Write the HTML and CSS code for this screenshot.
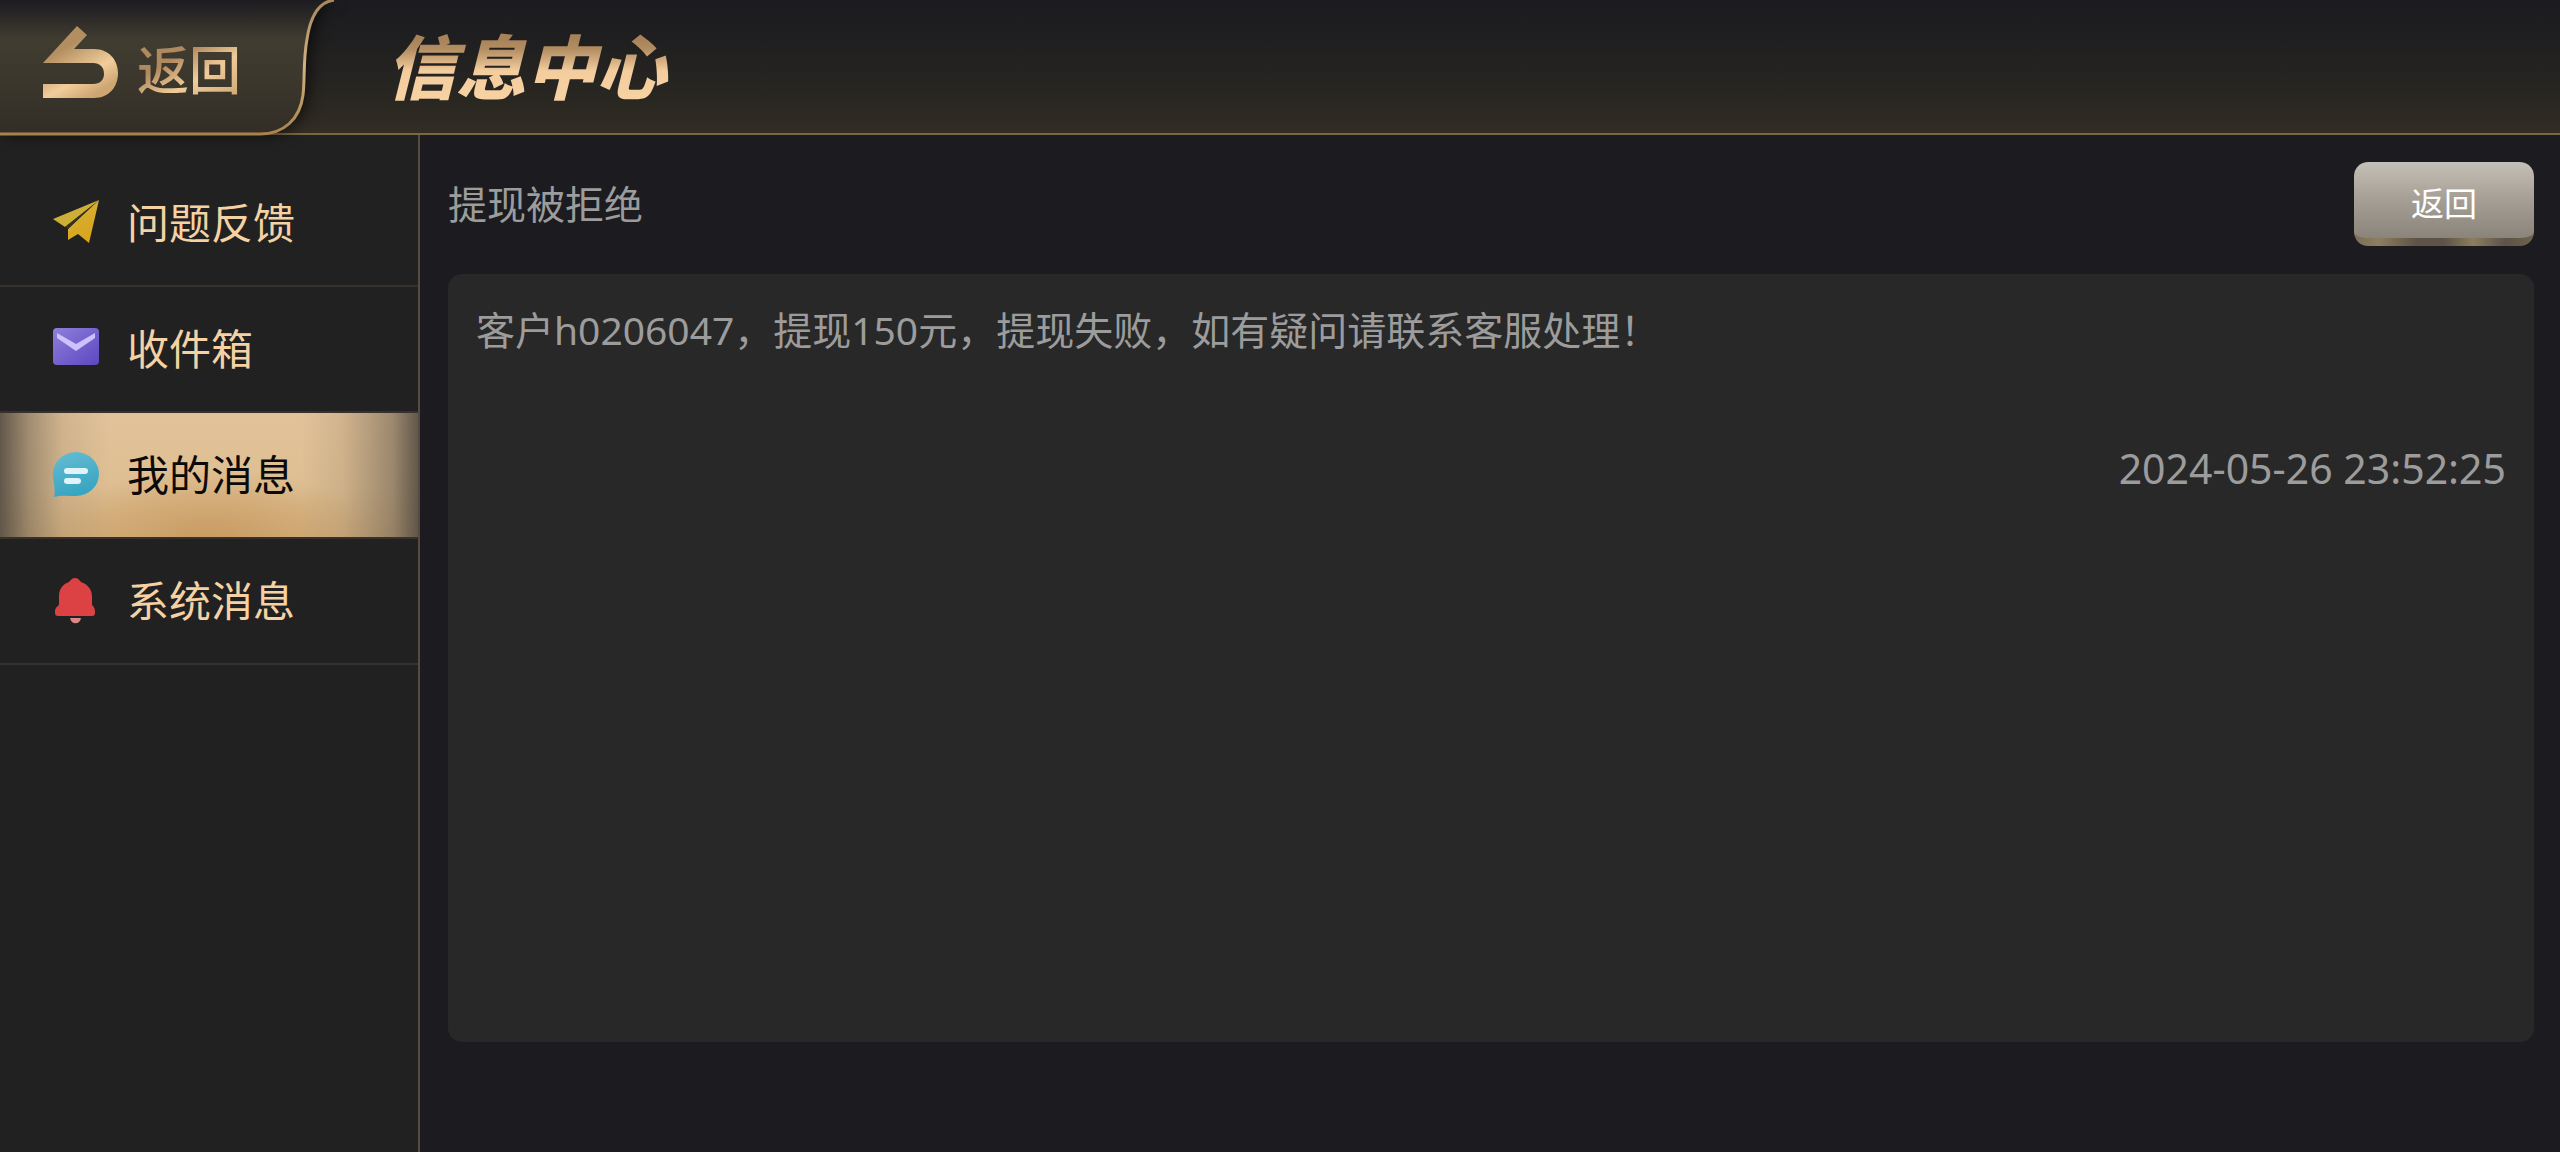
FILE: index.html
```html
<!DOCTYPE html>
<html lang="zh-CN">
<head>
    <meta charset="UTF-8">
    <meta name="viewport" content="width=device-width, initial-scale=1.0">
    <title>信息中心</title>
    <link rel="stylesheet" href="styles.css">
</head>
<body>
    <header class="header">
        <button class="back" type="button">
            <svg class="back-bg" viewBox="0 0 340 142" aria-hidden="true">
                <defs>
                    <linearGradient id="tabFill" x1="0" y1="0" x2="0" y2="1">
                        <stop offset="0" stop-color="#1c1b20"/>
                        <stop offset="0.3" stop-color="#403c30"/>
                        <stop offset="0.55" stop-color="#3c382d"/>
                        <stop offset="1" stop-color="#322e27"/>
                    </linearGradient>
                    <linearGradient id="tabLine" x1="0" y1="0" x2="0" y2="1">
                        <stop offset="0" stop-color="#a9885c"/>
                        <stop offset="0.5" stop-color="#d0b283"/>
                        <stop offset="1" stop-color="#a9824b"/>
                    </linearGradient>
                </defs>
                <path class="tab-fill" d="M0 0H334C318 3 310 20 307 40C303 62 305 80 303 96C300 120 284 135 260 135H0Z" fill="url(#tabFill)"/>
                <path d="M334 1C318 3 310 20 307 40C303 62 305 80 303 96C300 120 284 135 260 135H0" fill="none" stroke="url(#tabLine)" stroke-width="3"/>
            </svg>
            <svg class="back-icon" viewBox="0 0 76 74" aria-hidden="true">
                <defs>
                    <linearGradient id="arrowFill" x1="0" y1="0" x2="0.6" y2="1">
                        <stop offset="0" stop-color="#b08c60"/>
                        <stop offset="0.35" stop-color="#b38e60"/>
                        <stop offset="0.75" stop-color="#f2cd9b"/>
                        <stop offset="1" stop-color="#cda672"/>
                    </linearGradient>
                </defs>
                <path d="M0 37L34 0L44 9L31 23H51C66 23 75 34 75 47C75 61 66 72 51 72H0V58H50C57 58 61 54 61 48C61 41 57 37 50 37Z" fill="url(#arrowFill)"/>
            </svg>
            <span class="back-text">返回</span>
        </button>
        <h1 class="title">信息中心</h1>
    </header>

    <div class="page">
        <nav class="sidebar">
            <a class="menu-item" href="#feedback">
                <svg class="menu-icon" viewBox="0 0 46 46" aria-hidden="true">
                    <defs>
                        <linearGradient id="plane" x1="0" y1="0" x2="0.4" y2="1">
                            <stop offset="0" stop-color="#d2b43b"/>
                            <stop offset="1" stop-color="#dba41c"/>
                        </linearGradient>
                    </defs>
                    <path d="M0 19L46 0L12 27Z" fill="#cdae36"/>
                    <path d="M46 0L36 43L25 34L15 40V29Z" fill="url(#plane)"/>
                    <path d="M34 10L15 29L12 27Z" fill="#3b3315"/>
                </svg>
                <span>问题反馈</span>
            </a>
            <a class="menu-item" href="#inbox">
                <svg class="menu-icon" viewBox="0 0 46 46" aria-hidden="true">
                    <defs>
                        <linearGradient id="mail" x1="0" y1="0" x2="1" y2="1">
                            <stop offset="0" stop-color="#8f7fdc"/>
                            <stop offset="1" stop-color="#5d47c0"/>
                        </linearGradient>
                    </defs>
                    <rect x="0" y="2" width="46" height="37" rx="4" fill="url(#mail)"/>
                    <path d="M4 7L23 18L42 7V12L23 25L4 12Z" fill="#cdc2fb"/>
                </svg>
                <span>收件箱</span>
            </a>
            <a class="menu-item active" href="#mine" aria-current="page">
                <svg class="menu-icon" viewBox="0 0 46 46" aria-hidden="true">
                    <defs>
                        <linearGradient id="chat" x1="0" y1="0" x2="0.3" y2="1">
                            <stop offset="0" stop-color="#66bdd2"/>
                            <stop offset="1" stop-color="#38a5c2"/>
                        </linearGradient>
                    </defs>
                    <path d="M1 45C3 38 0 30 0 22A23 22 0 1 1 23 44C15 44 8 43 1 45Z" fill="url(#chat)"/>
                    <rect x="11" y="16" width="24" height="6" rx="3" fill="#dff3f8"/>
                    <rect x="11" y="26" width="17" height="6" rx="3" fill="#dff3f8"/>
                </svg>
                <span>我的消息</span>
            </a>
            <a class="menu-item" href="#system">
                <svg class="menu-icon" viewBox="0 0 46 46" aria-hidden="true">
                    <path d="M17 40H28C27 47 18 47 17 40Z" fill="#dc8686"/>
                    <path d="M22 0C19 0 18 2 16 4C10 6 6 11 6 18V26C6 28 2 29 2 33V35C2 37 3 38 5 38H39C41 38 42 37 42 35V33C42 29 39 28 39 26V18C39 11 34 6 28 4C26 2 25 0 22 0Z" fill="#dc4144"/>
                </svg>
                <span>系统消息</span>
            </a>
        </nav>

        <main class="content">
            <div class="content-head">
                <h2 class="subject">提现被拒绝</h2>
                <button class="return-btn" type="button">返回</button>
            </div>
            <article class="message">
                <p class="message-text">客户h0206047，提现150元，提现失败，如有疑问请联系客服处理！</p>
                <time class="message-time" datetime="2024-05-26T23:52:25">2024-05-26 23:52:25</time>
            </article>
        </main>
    </div>
</body>
</html>
```

FILE: styles.css
```css
* {
    box-sizing: border-box;
}
body {
    margin: 0;
    min-height: 100vh;
    display: flex;
    flex-direction: column;
    background-color: #1c1c20;
    color: #9c9c9c;
    font-family: "Noto Sans", "Noto Sans CJK SC", sans-serif;
}
button {
    border: 0;
    padding: 0;
    background: none;
    font-family: inherit;
    cursor: pointer;
}
h1, h2, p {
    margin: 0;
}

/* 顶部栏 */
.header {
    height: 135px;
    display: flex;
    align-items: center;
    gap: 46px;
    border-bottom: 2px solid #7d673f;
    background: linear-gradient(#1c1c20, #1f1f20 30%, #2b2822 80%, #322d25);
}
.back {
    position: relative;
    width: 340px;
    height: 135px;
    padding: 0 0 8px 43px;
    display: flex;
    align-items: center;
    gap: 18px;
}
.back-bg {
    position: absolute;
    top: 0;
    left: 0;
    width: 340px;
    height: 142px;
    overflow: visible;
}
.tab-fill {
    filter: drop-shadow(4px 0 8px rgba(0, 0, 0, 0.7));
}
.back-icon {
    position: relative;
    width: 76px;
    height: 74px;
}
.back-text,
.title {
    color: transparent;
    -webkit-background-clip: text;
    background-clip: text;
}
.back-text {
    position: relative;
    font-size: 52px;
    font-weight: 500;
    line-height: 60px;
    padding-top: 14px;
    background-image: linear-gradient(150deg, #b08a5f 40%, #f0cb9a 65%, #c9a270);
}
.title {
    font-size: 70px;
    font-weight: 900;
    font-style: italic;
    line-height: 80px;
    background-image: linear-gradient(#a88258 15%, #b48e63 28%, #f3cd9d 55%, #f8d3a3);
    padding-right: 12px;
}

.page {
    flex: 1;
    display: flex;
}

/* 左侧菜单 */
.sidebar {
    width: 420px;
    flex-shrink: 0;
    padding-top: 26px;
    border-right: 2px solid #554b41;
    background-color: #212122;
}
.menu-item {
    height: 126px;
    padding-left: 53px;
    display: flex;
    align-items: center;
    gap: 28px;
    border-bottom: 2px solid #37312d;
    color: #f5d2a4;
    font-size: 42px;
    line-height: 60px;
    text-decoration: none;
}
.menu-icon {
    width: 46px;
    height: 46px;
}
.menu-item.active {
    color: #0c0a08;
    background:
        linear-gradient(90deg, rgba(84, 76, 66, 0.9), rgba(110, 98, 82, 0.55) 7%, rgba(140, 122, 98, 0.2) 15%, transparent 26%, transparent 72%, rgba(140, 122, 98, 0.2) 82%, rgba(110, 98, 82, 0.6) 94%, rgba(84, 76, 66, 0.9)),
        radial-gradient(ellipse 40% 55% at 50% 100%, #c99d63, transparent),
        linear-gradient(#e2c299, #debe92 60%, #d3b07f);
}

/* 消息详情 */
.content {
    flex: 1;
    display: flex;
    flex-direction: column;
    gap: 28px;
    padding: 27px 26px 110px 28px;
}
.content-head {
    display: flex;
    align-items: center;
    justify-content: space-between;
}
.subject {
    font-size: 39px;
    font-weight: 400;
    line-height: 60px;
}
.return-btn {
    width: 180px;
    height: 84px;
    padding-top: 4px;
    border-radius: 14px;
    border-bottom: 8px solid transparent;
    color: #fff;
    font-size: 33px;
    background:
        linear-gradient(#c5c0b7, #a8a198 45%, #8b847b) padding-box,
        linear-gradient(90deg, #7c6f5a, #8c7e5f 14%, #5d5347 35%, #5d5347 50%, #8c7e5f 66%, #5d5347 84%, #6f634f) border-box;
}
.message {
    flex: 1;
    display: flex;
    flex-direction: column;
    gap: 78px;
    padding: 26px 28px;
    border-radius: 14px;
    background-color: #282828;
}
.message-text {
    font-size: 39px;
    line-height: 60px;
}
.message-time {
    align-self: flex-end;
    font-size: 41px;
    line-height: 60px;
}
```
